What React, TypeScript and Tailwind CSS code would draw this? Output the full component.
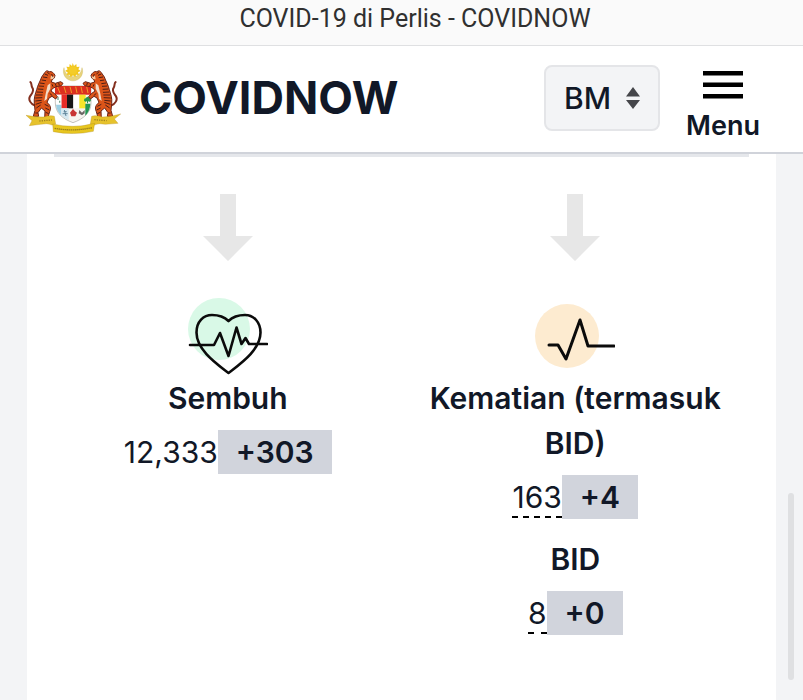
import React, { useState } from 'react';

interface StatProps {
  label: string;
  value: string;
  change: string;
  hasTooltip?: boolean;
}

const Stat: React.FC<StatProps> = ({ label, value, change, hasTooltip }) => {
  return (
    <div className="flex flex-col items-center gap-[9px] text-center text-[30px] leading-[45px]">
      <h3 className="font-semibold">{label}</h3>
      <div className="flex items-start justify-center leading-[44px]">
        <span className={hasTooltip ? 'h-[43px] border-b-2 border-dashed border-black' : ''}>
          {value}
        </span>
        <span className="bg-[#d1d4dc] px-[18px] font-semibold">{change}</span>
      </div>
    </div>
  );
};

const DownArrow = () => (
  <svg className="h-[67px] w-[50px]" viewBox="0 0 50 67" fill="#e7e7e7" aria-hidden="true">
    <path d="M17 0h16v42h17L25 67 0 42h17z" />
  </svg>
);

const RecoveredIcon = () => (
  <svg className="h-[78px] w-[80px]" viewBox="0 0 80 78" fill="none" aria-hidden="true">
    <circle cx="31" cy="31" r="31" fill="#d9f9e7" />
    <g stroke="#0b0b0b" strokeWidth="2.600" strokeLinejoin="round" strokeLinecap="round">
      <path d="M40.500 75C29 66 8.500 52 8.500 34.500C8.500 23.500 15.500 17 24 17C31 17 37 19.500 40.500 23C44 19.500 50 17 57 17C66 17 72.500 24.500 72.500 34.500C72.500 52 52 66 40.500 75Z" />
      <path d="M2 47H26L32 35L40.500 58L48.500 29.500L53.500 46L57.500 40L61 46H79" />
    </g>
  </svg>
);

const DeathIcon = () => (
  <svg className="h-[72px] w-[80px]" viewBox="0 0 80 72" fill="none" aria-hidden="true">
    <circle cx="32" cy="32" r="32" fill="#fdebd0" />
    <path
      d="M14 41H23L31 55L45 16L53 42H79"
      stroke="#0b0b0b"
      strokeWidth="3"
      strokeLinejoin="round"
      strokeLinecap="round"
    />
  </svg>
);

// One tiger, facing right; the crest mirrors it for the other side
const Tiger = () => (
  <g>
    <path d="M75 166C62 161 54 148 60 138C66 129 74 122 67 112C63 106 66 99 61 95" fill="none" stroke="#84301f" strokeWidth="6" strokeLinecap="round" />
    <path
      d="M104 67L110 61L118 64C126 62 131 68 135 75L133 83L126 88L124 95L136 99L152 94L159 99L154 106L138 109L127 115L123 122L134 130L142 139L137 146L126 138L117 143L111 156C122 165 124 174 119 184L115 198L122 205H104L105 182L94 173L84 187L86 198H70L75 180L73 160C71 144 76 130 80 118C83 104 91 92 95 80Z"
      fill="#dc5519"
      stroke="#6b2417"
      strokeWidth="3"
    />
    <path d="M113 105L121 99L121 115L113 130L111 146L103 152L107 130Z" fill="#f3dcc8" />
    <path d="M123 76L134 79L129 86L121 87Z" fill="#f3c69d" />
    <path
      d="M104 71L114 75M99 80L112 82M95 89L108 91M90 98L104 100M86 107L102 108M83 116L100 117M80 125L99 126M78 134L98 134M76 143L97 142M76 152L95 150M77 162L95 156M79 173L92 164M104 162L116 168M106 173L118 179M107 186L116 190M76 188L84 188M126 102L129 109M136 101L139 108M146 98L148 105M119 129L127 136M125 71L128 79M112 65L119 72"
      stroke="#4d1d16"
      strokeWidth="3"
      fill="none"
    />
  </g>
);

const Crest = () => (
  <svg className="h-[71px] w-[95px] shrink-0" viewBox="48 38 285 213" role="img" aria-label="Jata Negara Malaysia">
    <path d="M162 52A29 29 0 1 0 216 52A25 25 0 1 1 162 52Z" fill="#e8d47c" stroke="#c4ac52" strokeWidth="1" />
    <path
      d="M188 38L192 47L199 41L200 50L209 49L205 57L212 62L204 66L207 74L198 73L196 81L189 75L182 81L179 73L170 74L173 66L165 62L173 57L169 49L178 50L179 41L186 47Z"
      fill="#f2c71e"
    />
    <circle cx="189" cy="60" r="12" fill="#f4cc28" />
    {/* Shield */}
    <path d="M136 107H243V158C243 187 220 206 189 217C158 206 136 187 136 158Z" fill="#f7f4f0" stroke="#a7a6a0" strokeWidth="2" />
    <path d="M135 107H243V133H135Z" fill="#dc2f20" />
    <path d="M142 109L150 128M162 109L168 128M180 109L185 128M197 109L201 128M213 109L217 128M230 109L234 128" stroke="#ef9a28" strokeWidth="3" />
    <path d="M154 133H171V174H154Z" fill="#e62c28" />
    <path d="M171 133H190V174H171Z" fill="#191617" />
    <path d="M190 133H208V174H190Z" fill="#fff" />
    <path d="M208 133H227V174H208Z" fill="#f6e52a" />
    <path d="M137 133H154V165H138Z" fill="#fff" />
    <path d="M144 139V149M149 151V157" stroke="#78a48a" strokeWidth="4" />
    <path d="M138 163H154V196Q140 182 138 163Z" fill="#9ccfe4" />
    <path d="M154 174H176V210Q162 204 154 195Z" fill="#d5e8f1" />
    <path d="M161 184H170M158 190H173M163 179L168 197" stroke="#61859b" strokeWidth="3" />
    <path d="M226 160H241Q240 182 226 196Z" fill="#239653" />
    <path d="M228 144a5 5 0 1 1 10 0a5 5 0 1 1-4 8v7h-3v-7a5 5 0 1 1-3-8Z" fill="#28964d" />
    <path d="M189 176L195 183L201 187L196 198H184L180 187Z" fill="#c93534" />
    <path d="M208 179L216 187L224 179V189L216 195L206 189Z" fill="#6a6564" />
    <Tiger />
    <g transform="translate(378 0) scale(-1 1)">
      <Tiger />
    </g>
    {/* Ribbon */}
    <path d="M48 195Q77 201 100 200Q123 193 133 198L137 221L126 224Q112 217 92 222L58 226L66 211Z" fill="#e6c22c" stroke="#b58b18" strokeWidth="1" />
    <path d="M332 191Q301 200 278 200Q255 193 245 198L241 221L252 224Q268 217 286 222L324 219L313 206Z" fill="#e6c22c" stroke="#b58b18" strokeWidth="1" />
    <path d="M128 221Q190 236 254 219L250 243Q190 256 130 244Z" fill="#e8c61f" stroke="#aa8517" strokeWidth="1" />
    <path d="M134 234Q188 244 247 232" fill="none" stroke="#94791b" strokeWidth="4" strokeDasharray="4 2" />
    <path d="M88 212L126 209M253 208L290 211" stroke="#a38520" strokeWidth="4" strokeDasharray="4 3" />
  </svg>
);

const Header = () => {
  const [language, setLanguage] = useState('BM');

  return (
    <header className="flex items-start justify-between border-b-2 border-[#d0d3da] bg-white pt-[17px] pr-[43px] pb-[15px] pl-[26px]">
      <a href="#" className="flex items-center gap-[18px]">
        <Crest />
        <span className="pb-[2px] text-[45px] leading-[48px] font-bold">COVIDNOW</span>
      </a>

      <div className="flex h-[74px] items-start gap-[26px]">
        <div className="relative pt-[2px]">
          <select
            aria-label="Bahasa"
            value={language}
            onChange={(e) => setLanguage(e.target.value)}
            className="h-[66px] w-[116px] appearance-none rounded-lg border-2 border-[#e4e5e8] bg-[#f3f4f6] pl-[18px] text-[30px] font-medium"
          >
            <option value="BM">BM</option>
            <option value="EN">EN</option>
          </select>
          <svg
            className="pointer-events-none absolute top-6 right-5 h-[22px] w-[14px]"
            viewBox="0 0 14 22"
            fill="#45464a"
            aria-hidden="true"
          >
            <path d="M7 0l7 9.500H0zM0 13h14l-7 9z" />
          </svg>
        </div>

        <button type="button" className="flex flex-col items-center gap-[17px] pt-2">
          <svg className="h-7 w-10" viewBox="0 0 40 28" fill="#000" aria-hidden="true">
            <path d="M0 0h40v4.500H0zM0 11.500h40v4.500H0zM0 23h40v4.500H0z" />
          </svg>
          <span className="text-[27px] leading-5 font-semibold">Menu</span>
        </button>
      </div>
    </header>
  );
};

export default function App() {
  return (
    <div className="relative flex min-h-screen flex-col bg-[#f3f4f6] font-['Inter',sans-serif] text-[#111827]">
      <div className="border-b border-[#dfe0e2] bg-[#fafafa] pt-1 pb-[11px] pl-[27px] text-center font-['Roboto',sans-serif] text-[25px] leading-[30px] text-[#303030]">
        COVID-19 di Perlis - COVIDNOW
      </div>
      <Header />

      <main className="mx-[27px] flex-1 bg-white px-[27px] pb-16">
        <div className="h-[3px] bg-[#e5e7eb]"></div>
        <div className="grid grid-cols-2 pt-[37px]">
          <section className="flex flex-col items-center">
            <DownArrow />
            <div className="flex h-[115px] items-end">
              <RecoveredIcon />
            </div>
            <Stat label="Sembuh" value="12,333" change="+303" />
          </section>

          <section className="flex flex-col items-center">
            <DownArrow />
            <div className="flex h-[115px] items-end">
              <DeathIcon />
            </div>
            <div className="flex flex-col gap-[18px]">
              <Stat label="Kematian (termasuk BID)" value="163" change="+4" hasTooltip />
              <Stat label="BID" value="8" change="+0" hasTooltip />
            </div>
          </section>
        </div>
      </main>

      {/* Overlay scrollbar thumb */}
      <div className="absolute right-[9px] bottom-5 h-[187px] w-[6px] rounded-full bg-[#dfe0e2]"></div>
    </div>
  );
}
